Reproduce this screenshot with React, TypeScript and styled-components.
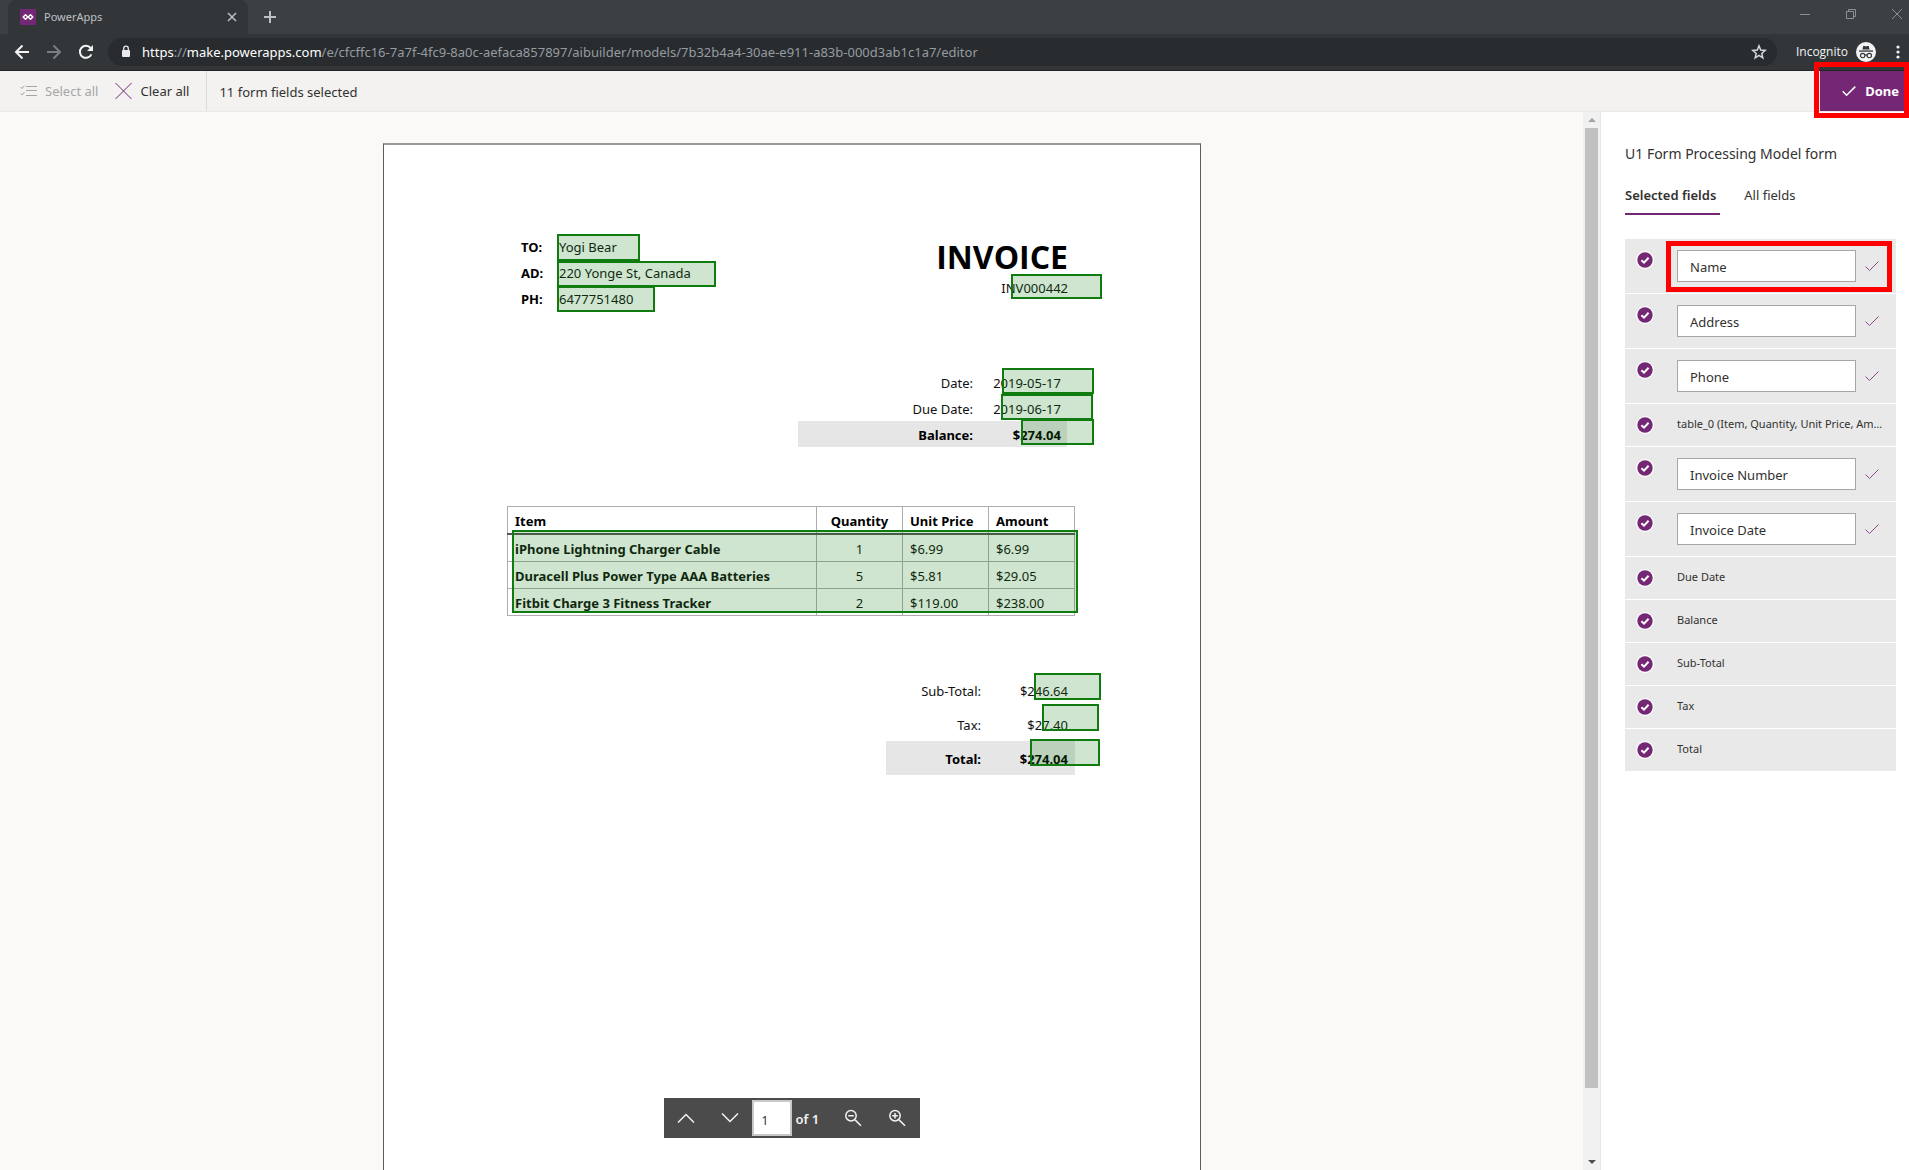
import React, { useState } from "react";
import styled, { createGlobalStyle, css } from "styled-components";

const colors = {
  purple: "#742774",
  green: "#107c10",
  highlight: "#ff0000",
  ink: "#323130",
};

const narrowFont = `"Open Sans", "Noto Sans", sans-serif`;

const GlobalStyle = createGlobalStyle`
  * { box-sizing: border-box; }
  html, body, #root { height: 100%; }
  body {
    margin: 0;
    overflow: hidden;
    font-family: "Noto Sans", "Open Sans", sans-serif;
    font-size: 13px;
    line-height: 20px;
    color: ${colors.ink};
  }
  button, input { font: inherit; color: inherit; }
  button { background: none; border: 0; padding: 0; cursor: pointer; }
  svg { display: block; flex: none; }
`;

const Shell = styled.div`
  display: flex;
  flex-direction: column;
  height: 100vh;
  background: #faf9f8;
`;

/* ---------- browser chrome ---------- */

const TabStrip = styled.div`
  display: flex;
  align-items: center;
  height: 34px;
  flex: none;
  padding-left: 8px;
  background: #3c4043;
  color: #bdc1c6;
`;

const BrowserTab = styled.div`
  display: flex;
  align-items: center;
  gap: 8px;
  width: 240px;
  height: 34px;
  padding: 6px 10px 6px 12px;
  border-radius: 8px 8px 0 0;
  background: #323639;
`;

const TabTitle = styled.span`
  flex: 1;
  font-size: 11px;
`;

const IconButton = styled.button<{ $w?: number }>`
  display: flex;
  align-items: center;
  justify-content: center;
  width: ${(p) => p.$w ?? 32}px;
  height: 28px;
  flex: none;
`;

const MenuButton = styled(IconButton)`
  width: 44px;
  margin-right: -11px;
`;

const WindowControls = styled.div`
  display: flex;
  align-items: center;
  margin-left: auto;
  height: 28px;
  align-self: flex-start;
  color: #8d9093;
  margin-right: -11px;
`;

const NavBar = styled.div`
  display: flex;
  align-items: center;
  height: 37px;
  flex: none;
  padding: 0 0 1px 6px;
  border-bottom: 1px solid #212427;
  background: #323639;
  color: #f1f3f4;
`;

const AddressBar = styled.div`
  display: flex;
  align-items: center;
  flex: 1;
  min-width: 0;
  height: 28px;
  margin-left: 6px;
  padding: 0 2px 0 13px;
  border-radius: 14px;
  background: #282c2f;
`;

const Url = styled.div`
  flex: 1;
  min-width: 0;
  margin-left: 11px;
  overflow: hidden;
  white-space: nowrap;
  outline: none;
  color: #969ba1;
`;

const UrlStrong = styled.span`
  color: #ffffff;
`;

const Profile = styled.div`
  display: flex;
  align-items: center;
  gap: 8px;
  margin-left: 19px;
  font-family: ${narrowFont};
  font-size: 12px;
`;

/* ---------- command bar ---------- */

const CommandBar = styled.header`
  display: flex;
  align-items: stretch;
  height: 41px;
  flex: none;
  padding-left: 20px;
  border-bottom: 1px solid #eaeaea;
  background: #f3f2f1;
`;

const Command = styled.button`
  display: flex;
  align-items: center;
  gap: 8px;
  margin-right: 17px;
  &:disabled {
    color: #a6a6a6;
    cursor: default;
  }
`;

const Status = styled.div`
  display: flex;
  align-items: center;
  padding: 2px 0 0 12px;
  border-left: 1px solid #dcdbda;
`;

const DoneWrap = styled.div`
  position: relative;
  display: flex;
  margin-left: auto;
  padding-right: 4px;
  background: ${colors.purple};
`;

const DoneButton = styled.button`
  display: flex;
  align-items: center;
  gap: 9px;
  height: 40px;
  padding: 0 6px 0 22px;
  color: #ffffff;
  font-weight: 700;
`;

const Callout = styled.div<{ $inset: string }>`
  position: absolute;
  inset: ${(p) => p.$inset};
  border: 5px solid ${colors.highlight};
  pointer-events: none;
  z-index: 2;
`;

/* ---------- document viewer ---------- */

const Workspace = styled.main`
  display: flex;
  flex: 1;
  min-height: 0;
`;

const Viewer = styled.section`
  position: relative;
  flex: 1;
  min-width: 0;
  overflow: hidden;
  padding: 31px 0 0 1px;
`;

const Page = styled.article`
  position: relative;
  width: 818px;
  height: 1058px;
  margin: 0 auto;
  padding: 90px 125px 0 123px;
  border: 1px solid #5c5c5c;
  border-top: 2px solid #9a9a9a;
  background: #ffffff;
  color: #111111;
`;

const DocHeader = styled.div`
  display: flex;
  justify-content: space-between;
  height: 78px;
  padding: 0 7px 0 14px;
`;

const Recipient = styled.dl`
  display: grid;
  grid-template-columns: 38px auto;
  grid-auto-rows: 26px;
  line-height: 25px;
  margin: 0;
  dt { font-weight: 700; color: #000000; }
  dd { margin: 0; }
`;

const InvoiceHeading = styled.div`
  text-align: right;
  line-height: 18px;
  h1 {
    margin: 0;
    font-family: ${narrowFont};
    font-size: 32px;
    line-height: 44px;
    color: #000000;
  }
`;

const Sums = styled.dl<{ $width: number; $label: number; $row: number; $end: number; $top: number }>`
  width: ${(p) => p.$width}px;
  margin: ${(p) => p.$top}px ${(p) => (p.$end === 6 ? 8 : 0)}px 0 auto;
  div {
    display: grid;
    grid-template-columns: ${(p) => p.$label}px 1fr;
    height: ${(p) => p.$row}px;
    padding: 1px ${(p) => p.$end}px 0 0;
    line-height: ${(p) => p.$row}px;
    text-align: right;
  }
  dd { margin: 0; }
  div:last-child {
    background: #e6e6e6;
    color: #000000;
    font-weight: 700;
  }
`;

const ItemTable = styled.table`
  width: 100%;
  margin-top: 59px;
  border-collapse: collapse;
  table-layout: fixed;
  th, td {
    height: 27px;
    padding: 2px 0 0 7px;
    border: 1px solid #adadad;
    text-align: left;
    line-height: 20px;
  }
  tbody tr:first-child > * { height: 28px; }
  thead th {
    border-bottom: 2px solid #555555;
    color: #000000;
  }
  th:nth-child(2), td:nth-child(2) {
    padding-left: 0;
    text-align: center;
  }
`;

const Region = styled.div<{ $x: number; $y: number; $w: number; $h: number }>`
  position: absolute;
  left: ${(p) => p.$x}px;
  top: ${(p) => p.$y}px;
  width: ${(p) => p.$w}px;
  height: ${(p) => p.$h}px;
  border: 2px solid ${colors.green};
  background: rgba(16, 124, 16, 0.2);
`;

const Pager = styled.div`
  position: absolute;
  left: 50%;
  bottom: 32px;
  transform: translateX(-50%);
  display: flex;
  align-items: center;
  width: 256px;
  height: 40px;
  background: #4b4b4b;
  color: #f3f2f1;
  font-weight: 600;
`;

const PageInput = styled.input`
  width: 40px;
  height: 36px;
  padding: 4px 0 0 8px;
  border: 2px solid #c8c8c8;
  border-radius: 0;
  background: #ffffff;
  color: ${colors.ink};
  font-size: 12px;
  font-weight: 400;
  outline: none;
`;

const PageCount = styled.span`
  margin: 2px 12px 0 4px;
`;

const ScrollTrack = styled.div`
  display: flex;
  flex-direction: column;
  align-items: center;
  width: 18px;
  flex: none;
  border-right: 1px solid #e6e6e6;
  background: #f1f1f1;
`;

const ScrollCap = styled.div`
  display: flex;
  align-items: center;
  height: 16px;
  flex: none;
`;

const ScrollSpace = styled.div`
  flex: 1;
  width: 13px;
`;

const ScrollThumb = styled.div`
  height: 93.6%;
  background: #c1c1c1;
`;

/* ---------- fields panel ---------- */

const Panel = styled.aside`
  width: 308px;
  flex: none;
  padding: 32px 13px 0 24px;
  background: #ffffff;
`;

const PanelTitle = styled.h2`
  margin: 0;
  font-size: 14px;
  font-weight: 400;
  line-height: 20px;
`;

const Tabs = styled.div`
  display: flex;
  gap: 24px;
  height: 51px;
  padding-top: 10px;
  margin-bottom: 24px;
`;

const Tab = styled.button<{ $active?: boolean }>`
  padding: 2px 4px 0 0;
  border-bottom: 2px solid transparent;
  white-space: nowrap;
  ${(p) =>
    p.$active &&
    css`
      border-bottom-color: ${colors.purple};
      font-weight: 600;
    `}
`;

const FieldList = styled.ul`
  display: flex;
  flex-direction: column;
  gap: 1px;
  margin: 0;
  padding: 0;
  list-style: none;
`;

const FieldRow = styled.li<{ $editable: boolean }>`
  position: relative;
  display: flex;
  align-items: flex-start;
  height: ${(p) => (p.$editable ? 54 : 42)}px;
  padding: 11px 8px 0 11px;
  background: #e9e9e9;
`;

const Tick = styled.label`
  position: relative;
  width: 18px;
  height: 18px;
  flex: none;
  margin-right: 23px;
  margin-top: 1px;
  input {
    position: absolute;
    inset: 0;
    width: 18px;
    height: 18px;
    margin: 0;
    opacity: 0;
  }
`;

const FieldName = styled.span`
  flex: 1;
  min-width: 0;
  overflow: hidden;
  text-overflow: ellipsis;
  white-space: nowrap;
  font-size: 11px;
  line-height: 18px;
`;

const FieldInput = styled.input`
  width: 179px;
  min-width: 0;
  height: 32px;
  padding: 2px 12px 0;
  border: 1px solid #a6a6a6;
  border-radius: 0;
  background: #ffffff;
  outline: none;
`;

const Confirm = styled.button`
  display: flex;
  align-items: center;
  justify-content: center;
  width: 32px;
  height: 32px;
`;

/* ---------- drawings ---------- */

const Stroke: React.FC<{ d: string; w?: number; h?: number; color?: string; width?: number }> = ({
  d,
  w = 16,
  h = 16,
  color = "currentColor",
  width = 1,
}) => (
  <svg width={w} height={h} viewBox={`0 0 ${w} ${h}`} fill="none" stroke={color} strokeWidth={width} aria-hidden>
    <path d={d} />
  </svg>
);

const Favicon = () => (
  <svg width="16" height="16" viewBox="0 0 16 16" aria-hidden>
    <rect width="16" height="16" fill={colors.purple} />
    <path
      d="M5.5 5.8 3.2 8l2.3 2.2L7.8 8zM10.5 5.8 8.2 8l2.3 2.2L12.8 8z"
      fill="none"
      stroke="#fff"
      strokeWidth="1.5"
      strokeLinejoin="round"
    />
  </svg>
);

const Reload = () => (
  <svg width="16" height="16" viewBox="0 0 16 16" fill="none" aria-hidden>
    <path d="M13.4 10.3A6 6 0 1 1 12.6 4" stroke="currentColor" strokeWidth="2" />
    <path d="M15 1v6H9z" fill="currentColor" />
  </svg>
);

const Lock = () => (
  <svg width="10" height="13" viewBox="0 0 10 13" aria-hidden>
    <rect x="1" y="5" width="8" height="7" rx="1" fill="#e8eaed" />
    <path d="M2.7 6V3.4a2.3 2.3 0 0 1 4.6 0V6" fill="none" stroke="#e8eaed" strokeWidth="1.3" />
  </svg>
);

const Incognito = () => (
  <svg width="20" height="20" viewBox="0 0 20 20" aria-hidden>
    <circle cx="10" cy="10" r="10" fill="#f1f3f4" />
    <path d="M6.4 7.5 7.3 4h1.3l1.4.4 1.4-.4h1.3l.9 3.5z" fill="#323639" />
    <rect x="3" y="8.4" width="14" height="1.3" fill="#323639" />
    <g fill="none" stroke="#323639" strokeWidth="1.1">
      <circle cx="6.7" cy="13.6" r="2.2" />
      <circle cx="13.3" cy="13.6" r="2.2" />
      <path d="M8.9 13.2q1.1-.7 2.2 0" />
    </g>
  </svg>
);

const Dots = () => (
  <svg width="4" height="14" viewBox="0 0 4 14" fill="#f1f3f4" aria-hidden>
    <circle cx="2" cy="2" r="1.6" />
    <circle cx="2" cy="7" r="1.6" />
    <circle cx="2" cy="12" r="1.6" />
  </svg>
);

const CheckBadge = () => (
  <svg width="18" height="18" viewBox="0 0 18 18" aria-hidden>
    <circle cx="9" cy="9" r="9" fill="#fff" />
    <circle cx="9" cy="9" r="7.7" fill={colors.purple} />
    <path d="M5.4 9.2 8 11.7l4.6-4.9" fill="none" stroke="#fff" strokeWidth="2" />
  </svg>
);

const Magnifier: React.FC<{ plus?: boolean }> = ({ plus }) => (
  <Stroke
    w={18}
    h={18}
    width={1.5}
    d={`M7 1.5a5.2 5.2 0 1 1 0 10.4 5.2 5.2 0 0 1 0-10.4M10.8 10.6 17 16.8M4.2 6.7h5.6${plus ? "M7 3.9v5.6" : ""}`}
  />
);

/* ---------- data ---------- */

const regions = [
  { x: 173, y: 89, w: 83, h: 27 },
  { x: 173, y: 116, w: 159, h: 26 },
  { x: 173, y: 141, w: 98, h: 26 },
  { x: 627, y: 129, w: 91, h: 25 },
  { x: 618, y: 223, w: 92, h: 26 },
  { x: 617, y: 249, w: 92, h: 26 },
  { x: 637, y: 274, w: 73, h: 26 },
  { x: 128, y: 385, w: 566, h: 83 },
  { x: 650, y: 528, w: 67, h: 27 },
  { x: 658, y: 559, w: 57, h: 27 },
  { x: 646, y: 594, w: 70, h: 27 },
];

const items = [
  ["iPhone Lightning Charger Cable", "1", "$6.99", "$6.99"],
  ["Duracell Plus Power Type AAA Batteries", "5", "$5.81", "$29.05"],
  ["Fitbit Charge 3 Fitness Tracker", "2", "$119.00", "$238.00"],
];

const fields = [
  { name: "Name", editable: true, callout: true },
  { name: "Address", editable: true },
  { name: "Phone", editable: true },
  { name: "table_0 (Item, Quantity, Unit Price, Amount)", editable: false },
  { name: "Invoice Number", editable: true },
  { name: "Invoice Date", editable: true },
  { name: "Due Date", editable: false },
  { name: "Balance", editable: false },
  { name: "Sub-Total", editable: false },
  { name: "Tax", editable: false },
  { name: "Total", editable: false },
];

/* ---------- sections ---------- */

const Browser = () => (
  <>
    <TabStrip>
      <BrowserTab>
        <Favicon />
        <TabTitle>PowerApps</TabTitle>
        <IconButton $w={12} aria-label="Close tab">
          <Stroke w={10} h={10} width={1.5} d="M1 1l8 8M9 1 1 9" />
        </IconButton>
      </BrowserTab>
      <IconButton $w={44} aria-label="New tab">
        <Stroke w={12} h={12} width={2} d="M6 0v12M0 6h12" />
      </IconButton>
      <WindowControls>
        <IconButton $w={46} aria-label="Minimize">
          <Stroke w={10} h={10} d="M0 5.5h10" />
        </IconButton>
        <IconButton $w={46} aria-label="Restore">
          <Stroke w={10} h={10} d="M.5 2.5h7v7h-7zM2.5 2.5v-2h7v7h-2" />
        </IconButton>
        <IconButton $w={46} aria-label="Close window">
          <Stroke w={10} h={10} d="M0 0l10 10M10 0 0 10" />
        </IconButton>
      </WindowControls>
    </TabStrip>
    <NavBar>
      <IconButton aria-label="Back">
        <Stroke w={16} h={16} width={2} d="M15 8H2M8.5 1.5 2 8l6.5 6.5" />
      </IconButton>
      <IconButton aria-label="Forward">
        <Stroke w={16} h={16} width={2} color="#7b7e81" d="M1 8h13M7.5 1.5 14 8l-6.5 6.5" />
      </IconButton>
      <IconButton aria-label="Reload">
        <Reload />
      </IconButton>
      <AddressBar>
        <Lock />
        <Url role="textbox" aria-label="Address">
          <UrlStrong>https</UrlStrong>://<UrlStrong>make.powerapps.com</UrlStrong>
          /e/cfcffc16-7a7f-4fc9-8a0c-aefaca857897/aibuilder/models/7b32b4a4-30ae-e911-a83b-000d3ab1c1a7/editor
        </Url>
        <IconButton aria-label="Bookmark">
          <Stroke
            w={16}
            h={16}
            width={1.5}
            color="#d5d7da"
            d="M8 1.8l1.7 4.2 4.5.4-3.4 3 1 4.4L8 11.4l-3.8 2.4 1-4.4-3.4-3L6.3 6z"
          />
        </IconButton>
      </AddressBar>
      <Profile>
        Incognito
        <Incognito />
      </Profile>
      <MenuButton aria-label="Menu">
        <Dots />
      </MenuButton>
    </NavBar>
  </>
);

const Invoice = () => (
  <Page>
    <DocHeader>
      <Recipient>
        <dt>TO:</dt>
        <dd>Yogi Bear</dd>
        <dt>AD:</dt>
        <dd>220 Yonge St, Canada</dd>
        <dt>PH:</dt>
        <dd>6477751480</dd>
      </Recipient>
      <InvoiceHeading>
        <h1>INVOICE</h1>
        INV000442
      </InvoiceHeading>
    </DocHeader>
    <Sums $width={269} $label={175} $row={26} $end={6} $top={56}>
      <div><dt>Date:</dt><dd>2019-05-17</dd></div>
      <div><dt>Due Date:</dt><dd>2019-06-17</dd></div>
      <div><dt>Balance:</dt><dd>$274.04</dd></div>
    </Sums>
    <ItemTable>
      <colgroup>
        <col />
        <col width="86" />
        <col width="86" />
        <col width="86" />
      </colgroup>
      <thead>
        <tr>
          <th>Item</th>
          <th>Quantity</th>
          <th>Unit Price</th>
          <th>Amount</th>
        </tr>
      </thead>
      <tbody>
        {items.map(([item, qty, price, amount]) => (
          <tr key={item}>
            <th scope="row">{item}</th>
            <td>{qty}</td>
            <td>{price}</td>
            <td>{amount}</td>
          </tr>
        ))}
      </tbody>
    </ItemTable>
    <Sums $width={189} $label={95} $row={34} $end={7} $top={57}>
      <div><dt>Sub-Total:</dt><dd>$246.64</dd></div>
      <div><dt>Tax:</dt><dd>$27.40</dd></div>
      <div><dt>Total:</dt><dd>$274.04</dd></div>
    </Sums>
    {regions.map((r) => (
      <Region key={`${r.x}-${r.y}`} $x={r.x} $y={r.y} $w={r.w} $h={r.h} />
    ))}
  </Page>
);

const FieldItem: React.FC<{ name: string; editable: boolean; callout?: boolean }> = ({ name, editable, callout }) => {
  const [label, setLabel] = useState(name);
  return (
    <FieldRow $editable={editable}>
      <Tick>
        <input type="checkbox" defaultChecked aria-label={name} />
        <CheckBadge />
      </Tick>
      {editable ? (
        <>
          <FieldInput aria-label={`${name} label`} value={label} onChange={(e) => setLabel(e.target.value)} />
          <Confirm aria-label={`Confirm ${name}`}>
            <Stroke w={14} h={10} color="#8a4a8a" d="M.5 5.5l4 4 9-9" />
          </Confirm>
        </>
      ) : (
        <FieldName>{name}</FieldName>
      )}
      {callout && <Callout $inset="2px 4px 1px 41px" />}
    </FieldRow>
  );
};

export default function App() {
  return (
    <Shell>
      <GlobalStyle />
      <Browser />
      <CommandBar>
        <Command disabled>
          <Stroke
            w={17}
            h={12}
            d="M6 1.5h11M6 5.5h11M6 10.5h11M.5 2 2 3.5 4.5.5M.5 8.5 2 10l2.5-3"
          />
          Select all
        </Command>
        <Command>
          <Stroke w={17} h={16} color={colors.purple} d="M.5 0l16 16M16.5 0l-16 16" />
          Clear all
        </Command>
        <Status>11 form fields selected</Status>
        <DoneWrap>
          <DoneButton>
            <Stroke w={14} h={10} width={1.5} d="M.7 5.3l3.9 3.9 8.7-8.6" />
            Done
          </DoneButton>
          <Callout $inset="-9px 0 -7px -6px" />
        </DoneWrap>
      </CommandBar>
      <Workspace>
        <Viewer>
          <Invoice />
          <Pager>
            <IconButton $w={44} aria-label="Previous page">
              <Stroke w={18} h={10} width={1.5} d="M1 9.5l8-8 8 8" />
            </IconButton>
            <IconButton $w={44} aria-label="Next page">
              <Stroke w={18} h={10} width={1.5} d="M1 .5l8 8 8-8" />
            </IconButton>
            <PageInput aria-label="Page" defaultValue="1" />
            <PageCount>of 1</PageCount>
            <IconButton $w={44} aria-label="Zoom out">
              <Magnifier />
            </IconButton>
            <IconButton $w={44} aria-label="Zoom in">
              <Magnifier plus />
            </IconButton>
          </Pager>
        </Viewer>
        <ScrollTrack>
          <ScrollCap>
            <svg width="8" height="4" viewBox="0 0 8 4" aria-hidden><path d="M0 4 4 0l4 4z" fill="#a3a3a3" /></svg>
          </ScrollCap>
          <ScrollSpace>
            <ScrollThumb />
          </ScrollSpace>
          <ScrollCap>
            <svg width="8" height="4" viewBox="0 0 8 4" aria-hidden><path d="M0 0l4 4 4-4z" fill="#505050" /></svg>
          </ScrollCap>
        </ScrollTrack>
        <Panel>
          <PanelTitle>U1 Form Processing Model form</PanelTitle>
          <Tabs role="tablist">
            <Tab role="tab" aria-selected $active>Selected fields</Tab>
            <Tab role="tab" aria-selected={false}>All fields</Tab>
          </Tabs>
          <FieldList>
            {fields.map((f) => (
              <FieldItem key={f.name} {...f} />
            ))}
          </FieldList>
        </Panel>
      </Workspace>
    </Shell>
  );
}
